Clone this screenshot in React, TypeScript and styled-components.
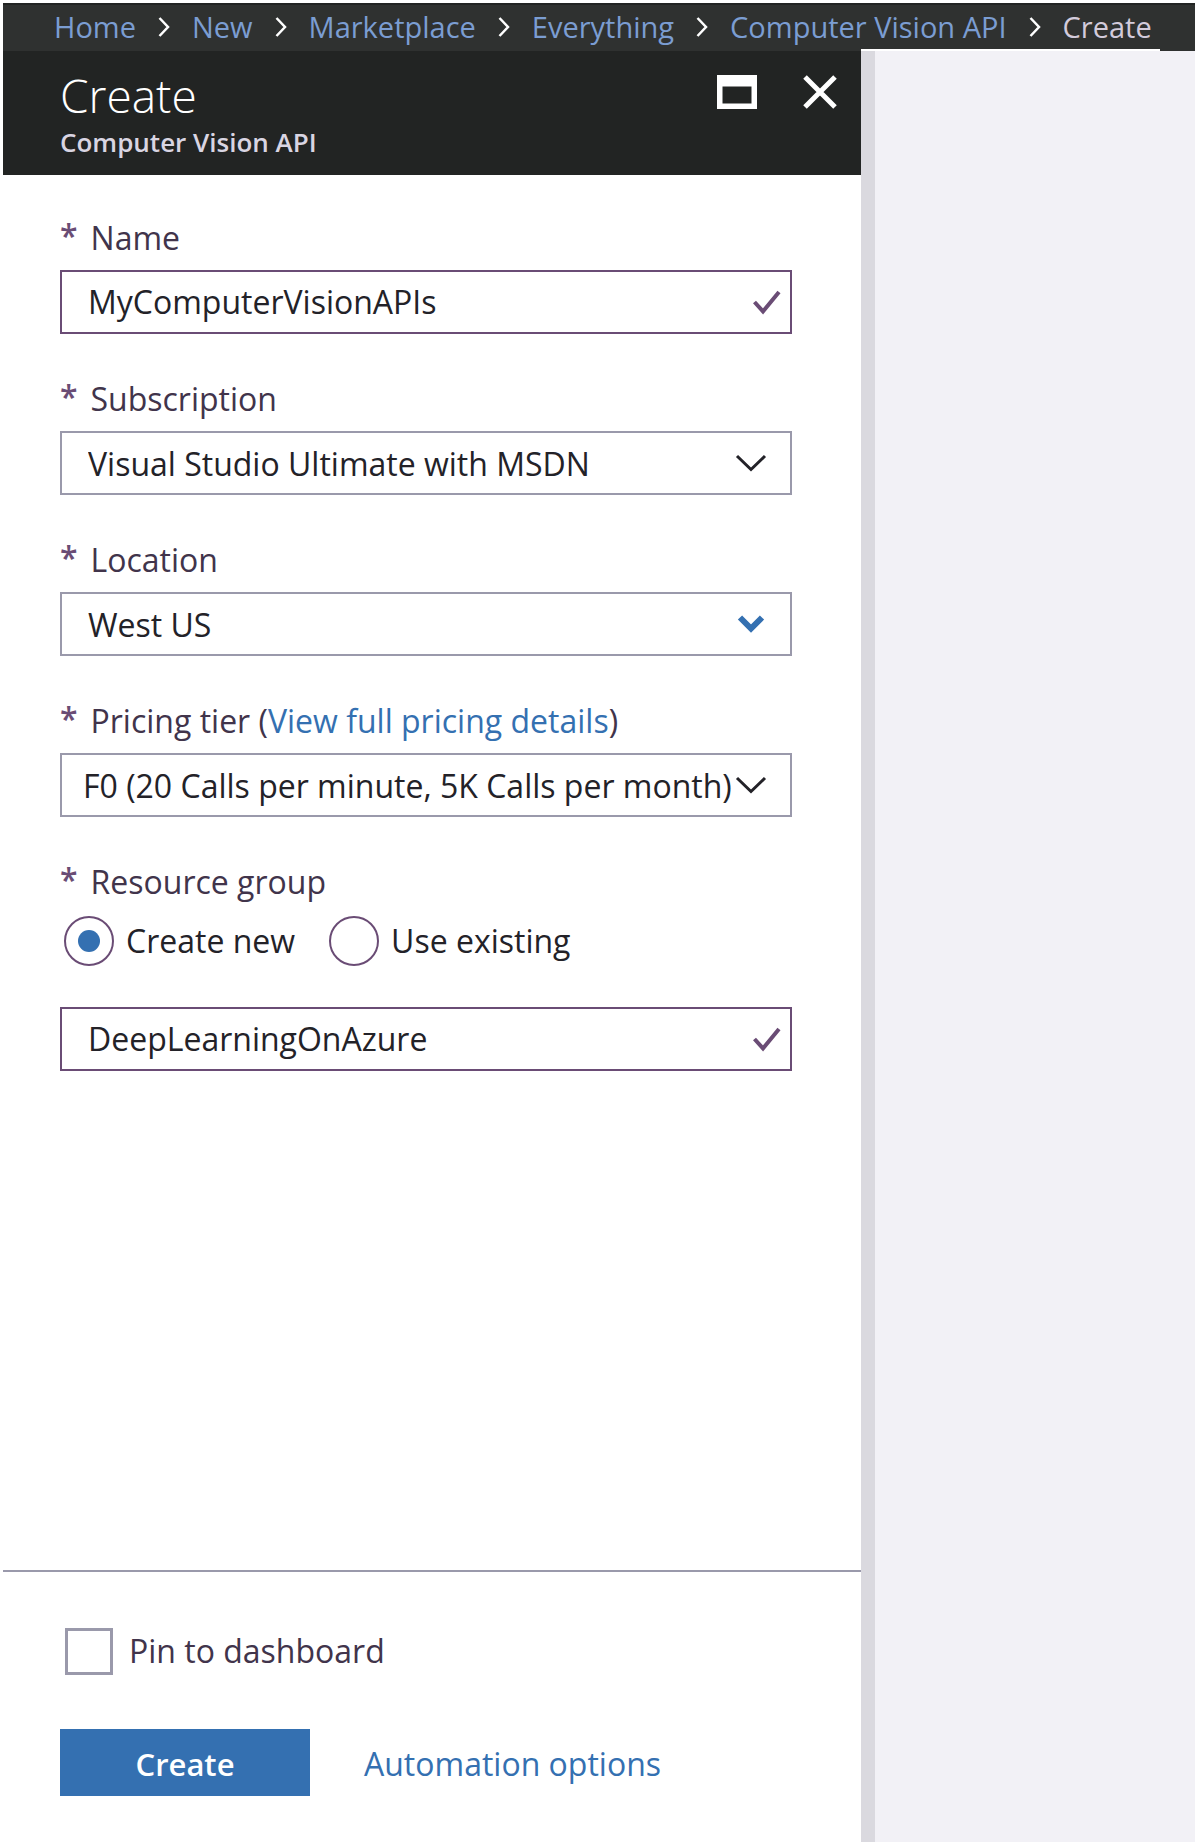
import React, { useState } from "react";
import styled, { createGlobalStyle } from "styled-components";

const blue = "#3470b1";
const purple = "#6a4c75";
const grey = "#9a99ab";
const ink = "#232228";

const GlobalStyle = createGlobalStyle`
  *, *::before, *::after { box-sizing: border-box; }
  body {
    margin: 0;
    background: #fff;
    color: ${ink};
    font-family: "Open Sans", "Noto Sans", sans-serif;
    font-size: 32px;
  }
  button, input, select { font: inherit; color: inherit; }
  a { text-decoration: none; }
`;

const Page = styled.div`
  min-height: 100vh;
  display: flex;
  flex-direction: column;
  padding: 3px 5px 5px 3px;
`;

const Breadcrumb = styled.nav`
  position: relative;
  background: #2f3130;
  border-top: 2px solid #222423;
  &::after {
    content: "";
    position: absolute;
    bottom: 0;
    left: 72%;
    right: 35px;
    height: 2px;
    background: #fff;
  }
`;

const CrumbList = styled.ol`
  list-style: none;
  margin: 0;
  padding: 0 0 2px 51px;
  display: flex;
  align-items: center;
  font-size: 29px;
  line-height: 44px;
  white-space: nowrap;
`;

const CrumbItem = styled.li`
  display: flex;
  align-items: center;
  color: #d3cbdb;
`;

const CrumbLink = styled.a`
  color: #7b9dd2;
`;

const CrumbArrow = styled.svg`
  width: 12px;
  height: 20px;
  margin: 0 22px;
`;

const Workspace = styled.div`
  flex: 1;
  display: flex;
`;

const Blade = styled.main`
  width: 72%;
  display: flex;
  flex-direction: column;
`;

const Backdrop = styled.aside`
  flex: 1;
  background: #f2f1f6;
  border-left: 14px solid #dad9df;
`;

const BladeHeader = styled.header`
  display: flex;
  justify-content: space-between;
  background: #222423;
  padding: 15px 24px 15px 57px;
`;

const Title = styled.h1`
  margin: 0;
  color: #fff;
  font-size: 46px;
  font-weight: 300;
  line-height: 58px;
`;

const Subtitle = styled.p`
  margin: 0;
  color: #d9d5e2;
  font-size: 26px;
  font-weight: 600;
  line-height: 36px;
`;

const WindowActions = styled.div`
  display: flex;
  align-items: flex-start;
  gap: 46px;
  padding-top: 9px;
`;

const IconButton = styled.button`
  display: flex;
  padding: 0;
  border: 0;
  background: none;
  cursor: pointer;
`;

const Form = styled.form`
  flex: 1;
  display: flex;
  flex-direction: column;
`;

const Fields = styled.div`
  flex: 1;
  display: flex;
  flex-direction: column;
  gap: 41px;
  padding: 39px 69px 41px 57px;
`;

const Field = styled.div`
  display: flex;
  flex-direction: column;
  gap: 8px;
`;

const Group = styled.fieldset`
  margin: 0;
  padding: 0;
  border: 0;
  min-width: 0;
`;

const Caption = styled.div`
  display: flex;
  gap: 13px;
  line-height: 48px;
  color: #41344b;
`;

const Star = styled.span`
  color: ${purple};
  font-weight: 600;
  line-height: 44px;
`;

const Legend = styled.legend`
  padding: 0 0 10px;
`;

const TextLink = styled.a`
  color: ${blue};
`;

const Box = styled.div<{ $valid?: boolean }>`
  position: relative;
  border: 2px solid ${(p) => (p.$valid ? purple : grey)};
`;

const TextInput = styled.input`
  display: block;
  width: 100%;
  height: 60px;
  padding: 0 48px 2px 26px;
  border: 0;
  background: none;
  outline: none;
`;

const Select = styled.select<{ $dense?: boolean }>`
  display: block;
  width: 100%;
  height: 60px;
  padding: 0 56px 0 ${(p) => (p.$dense ? 21 : 26)}px;
  border: 0;
  background: none;
  appearance: none;
  outline: none;
`;

const BoxIcon = styled.svg<{ $right: number }>`
  position: absolute;
  right: ${(p) => p.$right}px;
  top: 50%;
  transform: translateY(-50%);
  pointer-events: none;
`;

const Choices = styled.div`
  display: flex;
  gap: 34px;
  padding-left: 4px;
`;

const Choice = styled.label<{ $muted?: boolean }>`
  display: flex;
  align-items: center;
  gap: 12px;
  line-height: 50px;
  color: ${(p) => (p.$muted ? "#41344b" : ink)};
`;

const Radio = styled.input`
  appearance: none;
  display: grid;
  place-items: center;
  width: 50px;
  height: 50px;
  margin: 0;
  border: 2px solid ${purple};
  border-radius: 50%;
  &:checked::before {
    content: "";
    width: 22px;
    height: 22px;
    border-radius: 50%;
    background: ${blue};
  }
`;

const Checkbox = styled.input`
  appearance: none;
  display: grid;
  place-items: center;
  width: 48px;
  height: 47px;
  margin: 0 4px 0 0;
  border: 3px solid ${grey};
  &:checked::before {
    content: "";
    width: 26px;
    height: 26px;
    background: ${blue};
  }
`;

const Footer = styled.footer`
  border-top: 2px solid ${grey};
  padding: 54px 69px 46px 57px;
`;

const PinRow = styled.div`
  display: flex;
  padding-left: 5px;
`;

const Actions = styled.div`
  display: flex;
  align-items: center;
  gap: 54px;
  margin-top: 53px;
`;

const PrimaryButton = styled.button`
  width: 250px;
  height: 67px;
  padding: 2px 0 0;
  border: 0;
  background: ${blue};
  color: #fff;
  font-size: 31px;
  font-weight: 600;
  cursor: pointer;
`;

const ActionLink = styled(TextLink)`
  padding-top: 2px;
`;

const Check = () => (
  <BoxIcon $right={8} width="30" height="26" viewBox="0 0 30 26" fill="none" aria-hidden="true">
    <path d="M2.5 13 11 22.500 27 3" stroke={purple} strokeWidth="4" />
  </BoxIcon>
);

const Chevron = ({ strong }: { strong?: boolean }) => (
  <BoxIcon $right={23} width="32" height="22" viewBox="0 0 32 22" fill="none" aria-hidden="true">
    {strong ? (
      <path d="M5 4.500 16 15.500 27 4.500" stroke={blue} strokeWidth="6" />
    ) : (
      <path d="M2 4 16 17.500 30 4" stroke={ink} strokeWidth="3" />
    )}
  </BoxIcon>
);

const Required = ({ id, children }: { id?: string; children: React.ReactNode }) => (
  <Caption>
    <Star aria-hidden="true">*</Star>
    {id ? <label htmlFor={id}>{children}</label> : <span>{children}</span>}
  </Caption>
);

const SelectField = (p: {
  id: string;
  label: string;
  value: string;
  extra?: React.ReactNode;
  strong?: boolean;
  dense?: boolean;
}) => (
  <Field>
    <Required id={p.id}>
      {p.label}
      {p.extra}
    </Required>
    <Box>
      <Select id={p.id} defaultValue={p.value} $dense={p.dense}>
        <option>{p.value}</option>
      </Select>
      <Chevron strong={p.strong} />
    </Box>
  </Field>
);

const trail = ["Home", "New", "Marketplace", "Everything", "Computer Vision API"];

export default function App() {
  const [group, setGroup] = useState("new");

  return (
    <>
      <GlobalStyle />
      <Page>
        <Breadcrumb aria-label="Breadcrumb">
          <CrumbList>
            {trail.map((name) => (
              <CrumbItem key={name}>
                <CrumbLink href="#">{name}</CrumbLink>
                <CrumbArrow viewBox="0 0 12 20" fill="none" aria-hidden="true">
                  <path d="M1.500 1 10 10 1.500 19" stroke="#fff" strokeWidth="2.500" />
                </CrumbArrow>
              </CrumbItem>
            ))}
            <CrumbItem aria-current="page">Create</CrumbItem>
          </CrumbList>
        </Breadcrumb>
        <Workspace>
          <Blade>
            <BladeHeader>
              <div>
                <Title>Create</Title>
                <Subtitle>Computer Vision API</Subtitle>
              </div>
              <WindowActions>
                <IconButton type="button" aria-label="Maximize">
                  <svg width="40" height="34" viewBox="0 0 40 34" aria-hidden="true">
                    <path fillRule="evenodd" fill="#fff" d="M0 0H40V34H0ZM5.500 11.500V28.500H34.500V11.500Z" />
                  </svg>
                </IconButton>
                <IconButton type="button" aria-label="Close">
                  <svg width="34" height="34" viewBox="0 0 34 34" aria-hidden="true">
                    <path d="M2 2 32 32M32 2 2 32" stroke="#fff" strokeWidth="5" />
                  </svg>
                </IconButton>
              </WindowActions>
            </BladeHeader>
            <Form onSubmit={(e) => e.preventDefault()}>
              <Fields>
                <Field>
                  <Required id="name">Name</Required>
                  <Box $valid>
                    <TextInput id="name" defaultValue="MyComputerVisionAPIs" spellCheck={false} />
                    <Check />
                  </Box>
                </Field>
                <SelectField id="subscription" label="Subscription" value="Visual Studio Ultimate with MSDN" />
                <SelectField id="location" label="Location" value="West US" strong />
                <SelectField
                  id="tier"
                  label="Pricing tier "
                  value="F0 (20 Calls per minute, 5K Calls per month)"
                  dense
                  extra={
                    <>
                      (<TextLink href="#">View full pricing details</TextLink>)
                    </>
                  }
                />
                <Group>
                  <Legend>
                    <Required>Resource group</Required>
                  </Legend>
                  <Choices>
                    <Choice>
                      <Radio type="radio" name="group" checked={group === "new"} onChange={() => setGroup("new")} />
                      Create new
                    </Choice>
                    <Choice>
                      <Radio
                        type="radio"
                        name="group"
                        checked={group === "existing"}
                        onChange={() => setGroup("existing")}
                      />
                      Use existing
                    </Choice>
                  </Choices>
                </Group>
                <Box $valid>
                  <TextInput aria-label="Resource group name" defaultValue="DeepLearningOnAzure" spellCheck={false} />
                  <Check />
                </Box>
              </Fields>
              <Footer>
                <PinRow>
                  <Choice $muted>
                    <Checkbox type="checkbox" />
                    Pin to dashboard
                  </Choice>
                </PinRow>
                <Actions>
                  <PrimaryButton type="submit">Create</PrimaryButton>
                  <ActionLink href="#">Automation options</ActionLink>
                </Actions>
              </Footer>
            </Form>
          </Blade>
          <Backdrop />
        </Workspace>
      </Page>
    </>
  );
}
